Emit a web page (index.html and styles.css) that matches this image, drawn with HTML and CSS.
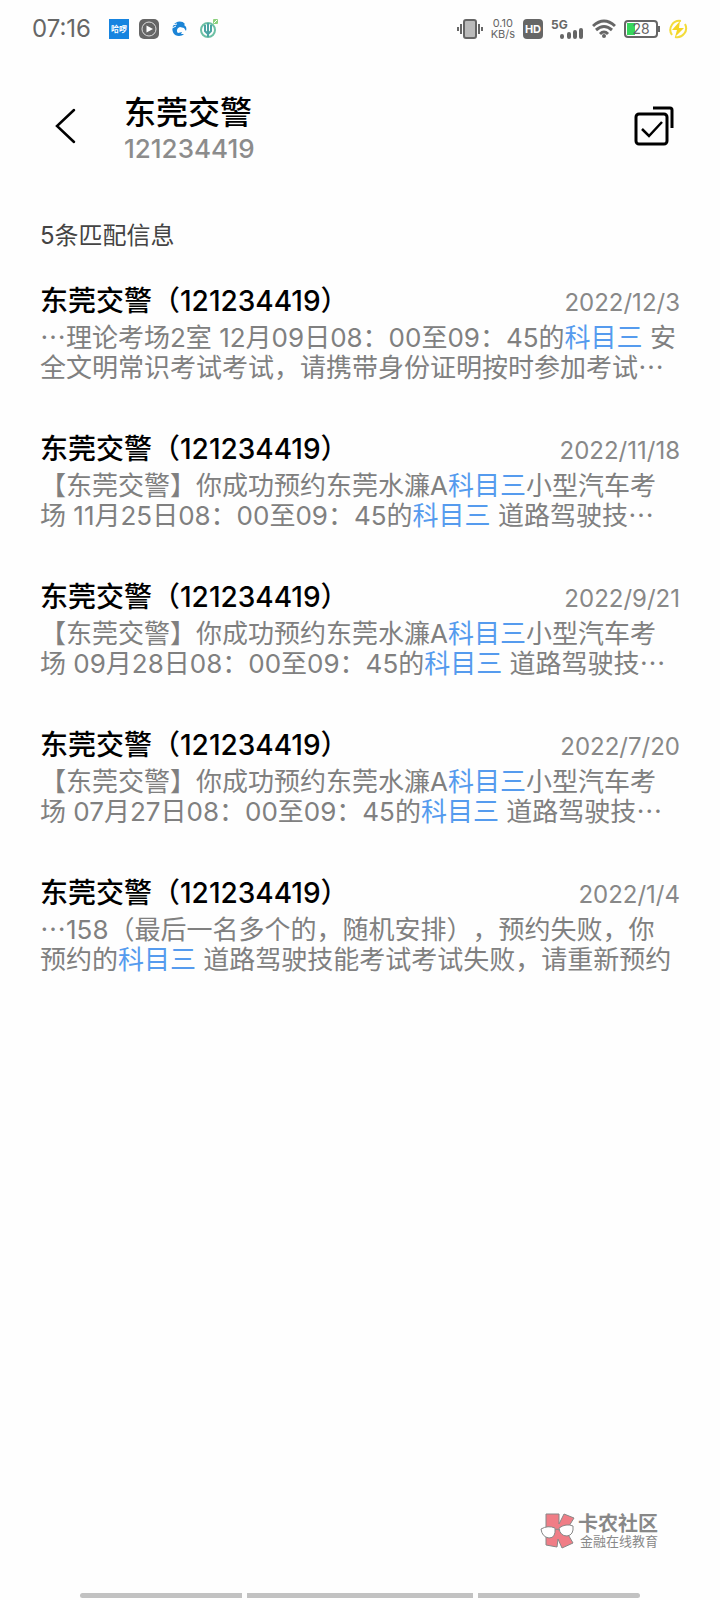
FILE: index.html
```
<!DOCTYPE html>
<html lang="zh-CN">
<head>
  <meta charset="UTF-8">
  <meta name="viewport" content="width=device-width, initial-scale=1.0">
  <title>东莞交警</title>
  <link rel="stylesheet" href="styles.css">
</head>
<body>
  <div class="status-bar">
    <div class="status-left">
      <span class="clock">07:16</span>
      <span class="app-haluo">哈啰</span>
      <svg width="20" height="20" viewBox="0 0 20 20">
        <rect width="20" height="20" rx="5" fill="#666"/>
        <circle cx="10" cy="10" r="7" fill="none" stroke="#ddd" stroke-width="1"/>
        <path d="M7.5 6.5 L14 10 L7.5 13.5Z" fill="#fff"/>
      </svg>
      <svg width="20" height="20" viewBox="0 0 20 20">
        <path d="M16 5 C13 1 6 2 4 7 C2 12 5 17 10 17 C12 17 14 16 15 15 L12 15 L13 13 L9 14 C7 12 8 9 11 8 L15 9 L17 12 C18 9 17 7 15 6Z" fill="#1b84d6"/>
        <path d="M3 6 L8 5 M3 9 L7 7 M12 11 L16 13" stroke="#fff" stroke-width="1"/>
      </svg>
      <svg width="20" height="20" viewBox="0 0 20 20">
        <circle cx="9" cy="11" r="7" fill="none" stroke="#6cc0a4" stroke-width="2"/>
        <path d="M9 4 V18 M6 6 V12 L9 15 L12 12 V6" fill="none" stroke="#4aa3a3" stroke-width="2"/>
        <rect x="14" y="0" width="5" height="5" rx="1" fill="#8bd07c"/>
        <path d="M15 4 L18 1" stroke="#fff" stroke-width="1"/>
      </svg>
    </div>
    <div class="status-right">
      <svg width="26" height="20" viewBox="0 0 26 20">
        <rect x="7" y="1" width="12" height="18" rx="2" fill="#bbb" stroke="#666" stroke-width="2"/>
        <path d="M4 5 V15 M22 5 V15 M1 8 V12 M25 8 V12" stroke="#666" stroke-width="2"/>
      </svg>
      <span class="speed">0.10<br>KB/s</span>
      <span class="hd">HD</span>
      <svg width="33" height="22" viewBox="0 0 33 22">
        <text x="0" y="11" class="signal-text">5G</text>
        <path d="M11 18 V19 M18 16 V19 M24 14 V19 M30 12 V19" stroke="#666" stroke-width="4" stroke-linecap="round"/>
      </svg>
      <svg width="24" height="20" viewBox="0 0 24 20">
        <path d="M1 7 Q12 -3 23 7 M4 11 Q12 4 20 11 M8 15 Q12 11 16 15" fill="none" stroke="#666" stroke-width="3"/>
        <circle cx="12" cy="17" r="2" fill="#666"/>
      </svg>
      <svg width="36" height="20" viewBox="0 0 36 20">
        <rect x="1" y="2" width="32" height="16" rx="3" fill="#fff" stroke="#666" stroke-width="2"/>
        <rect x="3" y="4" width="8" height="12" fill="#36d65c"/>
        <path d="M35 7 V13" stroke="#666" stroke-width="2"/>
        <text x="17" y="15" class="battery-text">28</text>
      </svg>
      <svg width="20" height="20" viewBox="0 0 20 20">
        <path d="M13 2 A9 9 0 0 0 4 16 M7 18 A9 9 0 0 0 17 5" fill="none" stroke="#f3dc3c" stroke-width="2"/>
        <path d="M12 2 L4 11 H9 L7 18 L16 9 H11Z" fill="#f5d522"/>
      </svg>
    </div>
  </div>

  <header class="header">
    <button class="icon-btn" aria-label="返回">
      <svg width="22" height="36" viewBox="0 0 22 36">
        <path d="M20 2 L3 18 L20 34" fill="none" stroke="#000" stroke-width="2.5" stroke-linecap="round"/>
      </svg>
    </button>
    <div class="header-text">
      <h1>东莞交警</h1>
      <p>121234419</p>
    </div>
    <button class="icon-btn" aria-label="多选">
      <svg width="40" height="40" viewBox="0 0 40 40">
        <rect x="2" y="8" width="31" height="30" rx="3" fill="none" stroke="#000" stroke-width="3"/>
        <path d="M19 2 H36 Q38 2 38 4 V22" fill="none" stroke="#000" stroke-width="3"/>
        <path d="M8 23 L15 30 L28 16" fill="none" stroke="#000" stroke-width="2.5"/>
      </svg>
    </button>
  </header>

  <main class="results">
    <h2>5条匹配信息</h2>
    <a class="item" href="#">
      <span class="row"><strong>东莞交警（121234419）</strong><time>2022/12/3</time></span>
      <span class="text">⋯理论考场2室 12月09日08：00至09：45的<mark>科目三</mark> 安<br>全文明常识考试考试，请携带身份证明按时参加考试⋯</span>
    </a>
    <a class="item" href="#">
      <span class="row"><strong>东莞交警（121234419）</strong><time>2022/11/18</time></span>
      <span class="text">【东莞交警】你成功预约东莞水濂A<mark>科目三</mark>小型汽车考<br>场 11月25日08：00至09：45的<mark>科目三</mark> 道路驾驶技⋯</span>
    </a>
    <a class="item" href="#">
      <span class="row"><strong>东莞交警（121234419）</strong><time>2022/9/21</time></span>
      <span class="text">【东莞交警】你成功预约东莞水濂A<mark>科目三</mark>小型汽车考<br>场 09月28日08：00至09：45的<mark>科目三</mark> 道路驾驶技⋯</span>
    </a>
    <a class="item" href="#">
      <span class="row"><strong>东莞交警（121234419）</strong><time>2022/7/20</time></span>
      <span class="text">【东莞交警】你成功预约东莞水濂A<mark>科目三</mark>小型汽车考<br>场 07月27日08：00至09：45的<mark>科目三</mark> 道路驾驶技⋯</span>
    </a>
    <a class="item" href="#">
      <span class="row"><strong>东莞交警（121234419）</strong><time>2022/1/4</time></span>
      <span class="text">⋯158（最后一名多个的，随机安排），预约失败，你<br>预约的<mark>科目三</mark> 道路驾驶技能考试考试失败，请重新预约</span>
    </a>
  </main>

  <footer>
    <div class="brand">
      <svg width="36" height="36" viewBox="0 0 36 36">
        <path d="M6 1 H19 V11 L24 1 L34 5 L26 18 L33 30 L22 35 L18 26 L17 34 L6 32Z" fill="#f07d86" stroke="#888" stroke-width="1"/>
        <path d="M1 16 Q8 12 15 15 Q16 25 9 25 Q2 24 1 16Z M19 15 Q26 10 33 13 Q34 22 27 23 Q20 23 19 15Z" fill="#fff" stroke="#888" stroke-width="1"/>
        <path d="M15 17 Q17 15 19 17" fill="none" stroke="#888" stroke-width="1"/>
      </svg>
      <div>
        <b>卡农社区</b>
        <small>金融在线教育</small>
      </div>
    </div>
    <div class="nav-bar"><span></span><span></span><span></span></div>
  </footer>
</body>
</html>
```
FILE: styles.css
```
* {
  box-sizing: border-box;
  margin: 0;
  padding: 0;
}
body {
  min-height: 100vh;
  display: flex;
  flex-direction: column;
  background: #fefefe;
  color: #000;
  font-family: Inter, "Noto Sans CJK SC", sans-serif;
  text-spacing-trim: space-all;
}
svg {
  display: block;
  flex: none;
}

/* status bar */
.status-bar {
  display: flex;
  justify-content: space-between;
  align-items: center;
  height: 58px;
  padding: 0 32px;
  color: #666;
}
.status-left,
.status-right {
  display: flex;
  align-items: center;
  gap: 10px;
}
.status-right {
  gap: 8px;
}
.clock {
  font-size: 24px;
  line-height: 28px;
  margin-right: 8px;
}
.app-haluo {
  width: 20px;
  height: 20px;
  background: #1684e0;
  color: #fff;
  font-size: 8px;
  font-weight: 700;
  line-height: 20px;
  text-align: center;
}
.speed {
  font-size: 11px;
  line-height: 11px;
  text-align: center;
}
.hd {
  width: 20px;
  height: 20px;
  border-radius: 4px;
  background: #666;
  color: #fff;
  font-size: 11px;
  font-weight: 700;
  line-height: 20px;
  text-align: center;
}
.signal-text {
  font-size: 12px;
  font-weight: 700;
  fill: #666;
}
.battery-text {
  font-size: 14px;
  text-anchor: middle;
  fill: #666;
}

/* header */
.header {
  display: flex;
  align-items: center;
  height: 136px;
  padding: 0 46px 0 54px;
}
.icon-btn {
  border: none;
  background: none;
  cursor: pointer;
}
.header-text {
  flex: 1;
  margin-left: 48px;
  padding-top: 6px;
}
.header-text h1 {
  font-size: 32px;
  font-weight: 500;
  line-height: 40px;
}
.header-text p {
  color: #8c8c8c;
  font-size: 26px;
  font-weight: 500;
  line-height: 32px;
}

/* search results */
.results {
  flex: 1;
  padding: 26px 40px;
}
.results h2 {
  color: #444;
  font-size: 24px;
  font-weight: 400;
  line-height: 32px;
  margin-bottom: 30px;
}
.item {
  display: block;
  margin-bottom: 47px;
  color: inherit;
  text-decoration: none;
  white-space: nowrap;
}
.row {
  display: flex;
  justify-content: space-between;
  height: 41px;
}
.row strong {
  font-size: 28px;
  font-weight: 500;
  line-height: 38px;
}
.row time {
  color: #888;
  font-size: 24px;
  line-height: 42px;
}
.text {
  display: block;
  color: #808080;
  font-size: 26px;
  line-height: 30px;
}
.text mark {
  background: none;
  color: #559bee;
}

/* bottom */
.brand {
  display: flex;
  justify-content: flex-end;
  align-items: center;
  gap: 2px;
  margin-bottom: 44px;
  padding-right: 62px;
  color: #888;
}
.brand b {
  display: block;
  font-size: 20px;
  line-height: 20px;
}
.brand small {
  display: block;
  font-size: 13px;
  line-height: 14px;
  margin-left: 2px;
}
.nav-bar {
  display: grid;
  grid-template-columns: 5fr 7fr 5fr;
  gap: 5px;
  padding: 0 80px 2px;
}
.nav-bar span {
  height: 5px;
  background: #c2c2c2;
}
.nav-bar span:first-child {
  border-radius: 3px 0 0 3px;
}
.nav-bar span:last-child {
  border-radius: 0 3px 3px 0;
}
```
